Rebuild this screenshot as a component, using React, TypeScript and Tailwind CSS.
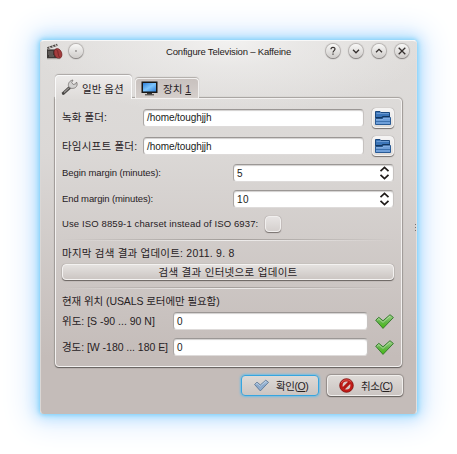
import type { ReactNode } from "react";

function FolderButton() {
  return (
    <button className="ml-[8px] flex h-[20px] w-[22px] shrink-0 items-center justify-center rounded-[4px] border border-[#f5f4f3] bg-linear-to-b from-[#f6f5f5] to-[#dedbd9] shadow-[0_1px_1px_#777270,0_0_1px_#8b8684]">
      <svg width="16" height="16" viewBox="0 0 16 16" className="shrink-0">
        <path d="M.5 1.5H5l1 1h8.500v6H.5z" fill="#3c75b8" stroke="#1c4a80" strokeWidth="1" />
        <path d="M1.500 3.500H14" stroke="#6b9ad2" strokeWidth="1" />
        <path d="M1 7.500h6l1-1h7" fill="none" stroke="#12365f" strokeWidth="1.200" />
        <path d="M.5 9H7l1.500-1.500h7v7H.5z" fill="#6f9fd9" stroke="#2a5b95" strokeWidth="1" />
        <path d="M1 11.500h14" stroke="#3e72af" strokeWidth="1" />
        <path d="M1 9.500h6.300l1.500-1.400H15" fill="none" stroke="#9cc2ec" strokeWidth=".7" />
      </svg>
    </button>
  );
}

function Check({ blue = false }: { blue?: boolean }) {
  return (
    <svg width={blue ? 15 : 19} height={blue ? 13 : 15} viewBox="0 0 19 15" className="shrink-0">
      <defs>
        <linearGradient id={blue ? "cb" : "cg"} x1="0" y1="0" x2="0" y2="1">
          <stop offset="0" stopColor={blue ? "#b5cbe3" : "#a4d58e"} />
          <stop offset=".5" stopColor={blue ? "#8ba9cb" : "#65b74d"} />
          <stop offset="1" stopColor={blue ? "#92b0d2" : "#43bd0c"} />
        </linearGradient>
      </defs>
      <path
        d="M.7 6.200 3.800 3.300 8 6.800 15 .7 18.400 3.500 8 14.400z"
        fill={`url(#${blue ? "cb" : "cg"})`}
        stroke={blue ? "#53708f" : "#397c31"}
        strokeWidth="1"
        strokeLinejoin="round"
      />
      <path d="m2.200 6.200 1.600-1.500 4.200 3.700 7-6.300" fill="none" stroke={blue ? "#d3e1f0" : "#bce0ac"} strokeWidth=".7" />
    </svg>
  );
}

function Field({ value, className }: { value: string; className: string }) {
  return (
    <div className={`flex h-[18px] shrink-0 items-center rounded-[4px] border border-t-[#9b9795] border-r-[#c6c2c0] border-b-[#dedbda] border-l-[#aaa6a4] bg-white pl-[3px] shadow-[inset_0_1px_1px_#d2d0cf] ${className}`}>
      <span className="pt-px text-[#201c1a]">{value}</span>
    </div>
  );
}

function SpinArrows() {
  return (
    <svg width="11" height="14" viewBox="0 0 11 14" className="shrink-0">
      <path d="M1.500 5.200 5.500 1.400l4 3.800M1.500 8.800l4 3.800 4-3.800" fill="none" stroke="#1f1b19" strokeWidth="1.700" />
    </svg>
  );
}

function SpinField({ value }: { value: string }) {
  return (
    <div className="relative">
      <Field value={value} className="w-[161px] tracking-[0.5px]" />
      <div className="absolute top-[2px] right-[4px]">
        <SpinArrows />
      </div>
    </div>
  );
}

function Separator() {
  return (
    <div className="flex h-[8px] flex-col justify-center">
      <div className="h-px bg-linear-to-r from-transparent via-[#a29d9a] to-transparent" />
      <div className="h-px bg-linear-to-r from-transparent via-[#f0eeed] to-transparent" />
    </div>
  );
}

function TitleButton({ children }: { children: ReactNode }) {
  return (
    <div className="flex size-[14px] items-center justify-center rounded-full bg-linear-to-b from-[#f8f8f7] to-[#cfccca] shadow-[0_1px_1px_#858180,0_0_1px_1px_#b4b0ae]">
      <svg width="14" height="14" viewBox="0 0 14 14" fill="none" stroke="#35302e" strokeWidth="1.300">
        {children}
      </svg>
    </div>
  );
}

function KaffeineIcon() {
  return (
    <svg width="17" height="17" viewBox="0 0 17 17">
      <path d="M1 4.300 11 .7l.7 2L1.700 6z" fill="#4b4643" />
      <path d="m3 3.700 1.500 1.200M6 2.600l1.500 1.200M9 1.500l1.400 1.200" stroke="#d9d5d1" strokeWidth="1.200" />
      <path d="M1 6h10v9H1z" fill="#3c3836" />
      <path d="M1.500 6.500H9M2 9h5M2 11h5M3 13h5" stroke="#8f8a87" strokeWidth=".8" />
      <ellipse cx="12" cy="10.500" rx="3.700" ry="5.200" transform="rotate(-22 12 10.500)" fill="#a23c3d" stroke="#6d2021" strokeWidth=".6" />
      <path d="M10.500 6.500c2.500 2 .8 5 3 8" fill="none" stroke="#7b2628" strokeWidth="1" />
      <path d="M1 15.700h13" stroke="#847f7c" strokeWidth=".8" />
    </svg>
  );
}

function WrenchIcon() {
  return (
    <svg width="17" height="17" viewBox="0 0 17 17">
      <path d="m1 13.500 6.500-6 2.500 2-7 6.300c-1.300.5-2.700-.8-2-2.300z" fill="#4a4745" />
      <path d="m3 13.500 5-4.600" stroke="#9a9795" strokeWidth="1.200" />
      <path
        d="M7.500 7.500C6.800 4.500 8.500 1.500 12 1l-1.300 2.500 1.500 2 2.600-.7L15.500 3c1.300 2.200.6 4.300-1 5.500-1.400 1-3 1-4.500.8z"
        fill="#d2d1d0"
        stroke="#777472"
        strokeWidth=".8"
      />
    </svg>
  );
}

function MonitorIcon() {
  return (
    <svg width="17" height="15" viewBox="0 0 17 15">
      <defs>
        <linearGradient id="screen" x1="0" y1="0" x2="1" y2="1">
          <stop offset="0" stopColor="#2f80d8" />
          <stop offset=".5" stopColor="#7cc4fb" />
          <stop offset="1" stopColor="#2f7ed6" />
        </linearGradient>
      </defs>
      <path d="M.5.500h16v11.500H.5z" fill="#171717" />
      <path d="M2 2h13v8.500H2z" fill="url(#screen)" />
      <path d="M6 12h5v1.300H6z" fill="#333" />
      <path d="M4 13.800h9" stroke="#37322f" strokeWidth="1" />
    </svg>
  );
}

function CancelIcon() {
  return (
    <svg width="15" height="15" viewBox="0 0 15 15">
      <circle cx="7.500" cy="7.500" r="6.800" fill="#c21a16" stroke="#7d0c0a" strokeWidth=".8" />
      <circle cx="7.500" cy="7.500" r="3.900" fill="#d9c9c7" />
      <path d="m4.400 10.600 6.200-6.200" stroke="#b31713" strokeWidth="3" />
      <path d="M2.200 5C4 1.500 9.500.7 12.300 4" fill="none" stroke="#df6965" strokeWidth=".8" />
    </svg>
  );
}

const latin = "text-[9.5px]";
const korean = "text-[10.5px]";

export default function App() {
  return (
    <div className="h-[454px] w-[457px] overflow-hidden bg-white pt-[40px] pl-[40px] font-['Liberation_Sans','Noto_Sans_CJK_KR',sans-serif] text-[10px] leading-none whitespace-nowrap text-[#27211f]">
      <div className="relative h-[374px] w-[377px] rounded-[4px] border border-t-[#f8f8f8] border-r-[#e2dfde] border-b-[#c4bcb9] border-l-[#dad7d5] bg-[radial-gradient(ellipse_200px_75px_at_50%_0,#f2f1f0_0%,#f0efee99_35%,transparent_100%),linear-gradient(#dfdddb_0,#dbd8d6_30%,#c4bcb9_85%)] shadow-[0_0_4px_1px_#7fd2fa,0_0_14px_3px_#a9dcfc,0_0_30px_10px_#dcebff]">
        <header className="flex h-[20px] items-center pl-[5px]">
          <KaffeineIcon />
          <div className="ml-[6px]">
            <TitleButton>
              <circle cx="7" cy="7" r=".3" strokeWidth=".8" />
            </TitleButton>
          </div>
          <h1 className="ml-[83px] w-[126px] pt-[2px] text-[9.5px] tracking-[-0.18px] text-[#1e1a18]">Configure Television – Kaffeine</h1>
          <div className="ml-[34px] flex gap-[9px]">
            <TitleButton>
              <path d="M5 5.200C5 2.700 9 2.800 9 5c0 1.500-2 1.700-2 3.500M7 9.500v1.300" strokeWidth="1.200" />
            </TitleButton>
            <TitleButton>
              <path d="m4 5.800 3 3 3-3" />
            </TitleButton>
            <TitleButton>
              <path d="m4 8.300 3-3 3 3" />
            </TitleButton>
            <TitleButton>
              <path d="m3.700 3.700 6.600 6.600m0-6.600-6.600 6.600" />
            </TitleButton>
          </div>
        </header>

        <nav className="mt-[13px] ml-[14px] flex h-[24px] items-end">
          <div className="relative z-10 -mb-px flex h-[24px] w-[77px] items-center rounded-t-[4px] border border-b-0 border-[#fafafa] bg-linear-to-b from-[#edebea] to-[#dedbd9] pl-[5px] shadow-[0_-1px_1px_#aaa6a4]">
            <WrenchIcon />
            <span className={`ml-[4px] pt-[3px] ${korean}`}>일반 옵션</span>
          </div>
          <div className="ml-[3px] flex h-[20px] w-[64px] items-center rounded-t-[4px] border border-b-0 border-[#f2f0ef] bg-linear-to-b from-[#c8c1be] to-[#d5cfcc] pl-[5px] shadow-[0_-1px_1px_#b0aba8]">
            <MonitorIcon />
            <span className={`ml-[5px] pt-px ${korean}`}>
              장치 <u className="underline-offset-1">1</u>
            </span>
          </div>
        </nav>

        <main className="ml-[14px] h-[269px] w-[347px] rounded-[4px] rounded-tl-none border border-[#f3f1f0] px-[6px] pt-[4px] shadow-[0_1px_1px_#65605e,0_0_1px_1px_#a5a09d]">
          <div className="flex h-[29px] items-center">
            <span className={`w-[81px] tracking-[0.1px] ${korean}`}>녹화 폴더:</span>
            <Field value="/home/toughjjh" className="w-[221px] tracking-[-0.08px]" />
            <FolderButton />
          </div>
          <div className="flex h-[28px] items-center">
            <span className={`w-[81px] tracking-[0.2px] ${korean}`}>타임시프트 폴더:</span>
            <Field value="/home/toughjjh" className="w-[221px] tracking-[-0.08px]" />
            <FolderButton />
          </div>
          <div className="flex h-[26px] items-center">
            <span className={`w-[171px] tracking-[-0.09px] ${latin}`}>Begin margin (minutes):</span>
            <SpinField value="5" />
          </div>
          <div className="flex h-[26px] items-center">
            <span className={`w-[171px] tracking-[-0.11px] ${latin}`}>End margin (minutes):</span>
            <SpinField value="10" />
          </div>
          <div className="flex h-[24px] items-center">
            <span className={`w-[203px] tracking-[0.12px] ${latin}`}>Use ISO 8859-1 charset instead of ISO 6937:</span>
            <div className="size-[16px] rounded-[4px] border border-[#f1efee] bg-linear-to-b from-[#e7e4e3] to-[#d5d0ce] shadow-[0_1px_1px_#77716e,0_0_1px_#8b8583]" />
          </div>
          <Separator />
          <div className={`flex h-[18px] items-center tracking-[0.22px] ${korean}`}>
            <span>마지막 검색 결과 업데이트: 2011. 9. 8</span>
          </div>
          <button className={`mt-[2px] flex h-[16px] w-[332px] items-center justify-center rounded-[4px] border border-[#f4f2f1] bg-linear-to-b from-[#e5e2e0] to-[#ccc6c3] tracking-[0.3px] shadow-[0_1px_1px_#68625f,0_0_1px_#89827f] ${korean}`}>
            검색 결과 인터넷으로 업데이트
          </button>
          <div className="mt-[4px]">
            <Separator />
          </div>
          <div className={`flex h-[16px] items-center pt-[2px] tracking-[-0.08px] ${korean}`}>
            <span>현재 위치 (USALS 로터에만 필요함)</span>
          </div>
          <div className="flex h-[26px] items-center">
            <span className={`w-[111px] ${korean}`}>위도: [S -90 ... 90 N]</span>
            <Field value="0" className="w-[195px]" />
            <div className="ml-[7px]">
              <Check />
            </div>
          </div>
          <div className="flex h-[26px] items-center">
            <span className={`w-[111px] tracking-[-0.04px] ${korean}`}>경도: [W -180 ... 180 E]</span>
            <Field value="0" className="w-[195px]" />
            <div className="ml-[7px]">
              <Check />
            </div>
          </div>
        </main>

        <footer className={`mt-[8px] flex justify-end gap-[8px] pr-[13px] ${korean}`}>
          <button className="flex h-[21px] w-[78px] items-center rounded-[4px] border border-[#36a5df] bg-linear-to-b from-[#dedad7] to-[#cbc5c2] pl-[12px] shadow-[0_0_2px_1px_#72bde3]">
            <Check blue />
            <span className="ml-[7px] pt-[2px] tracking-[-0.45px]">
              확인(<u className="underline-offset-1">O</u>)
            </span>
          </button>
          <button className="flex h-[21px] w-[76px] items-center rounded-[4px] border border-[#f0eeec] bg-linear-to-b from-[#dedad7] to-[#cbc5c2] pl-[11px] shadow-[0_1px_1px_#68625f,0_0_1px_1px_#98918e]">
            <CancelIcon />
            <span className="ml-[7px] pt-[2px] tracking-[-0.45px]">
              취소(<u className="underline-offset-1">C</u>)
            </span>
          </button>
        </footer>

        <div className="absolute top-[183px] right-0 flex flex-col gap-[2px]">
          <i className="size-px bg-[#77716e]" />
          <i className="size-px bg-[#77716e]" />
          <i className="size-px bg-[#77716e]" />
        </div>
      </div>
    </div>
  );
}
